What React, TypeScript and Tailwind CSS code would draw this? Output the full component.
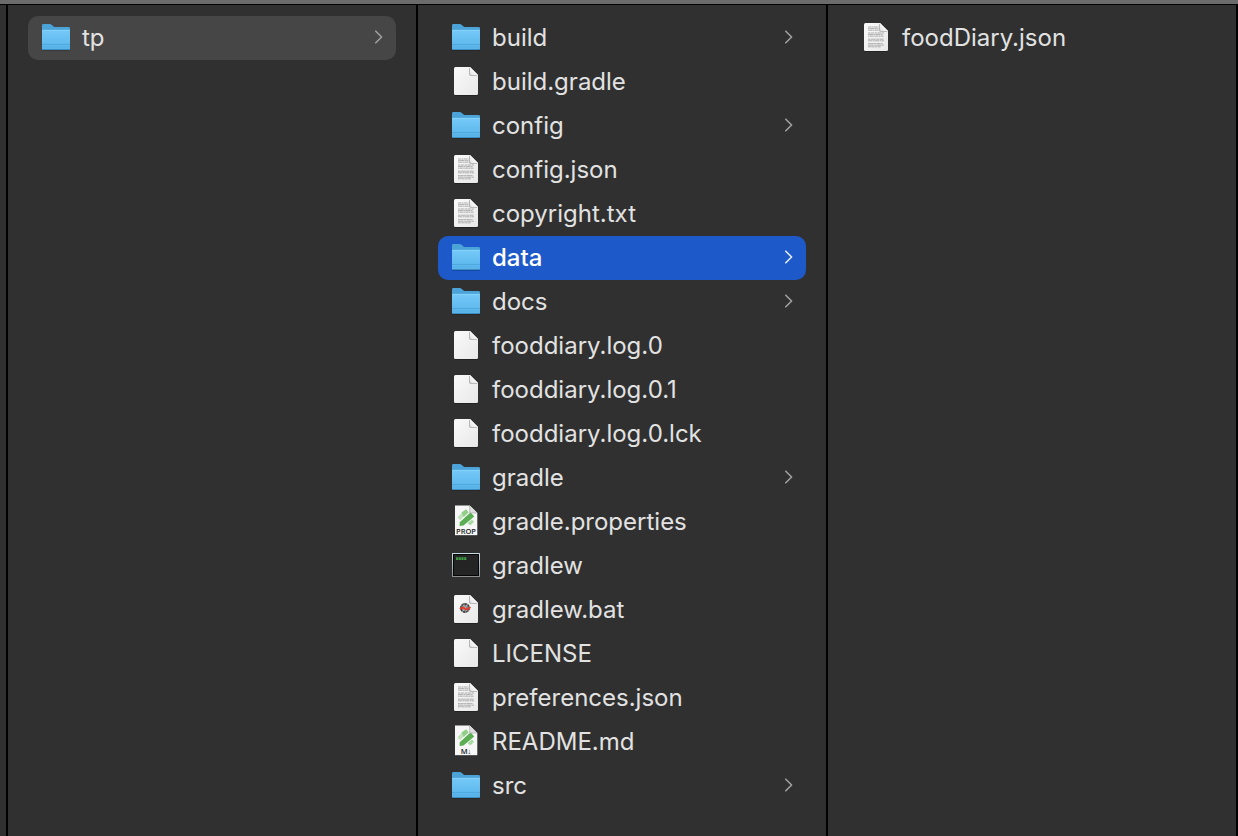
import React, { useState } from "react";

type Kind = "folder" | "blank" | "text" | "prop" | "markdown" | "exec" | "batch";
type Entry = { name: string; kind: Kind };

const rootEntries: Entry[] = [{ name: "tp", kind: "folder" }];

const projectEntries: Entry[] = [
  { name: "build", kind: "folder" },
  { name: "build.gradle", kind: "blank" },
  { name: "config", kind: "folder" },
  { name: "config.json", kind: "text" },
  { name: "copyright.txt", kind: "text" },
  { name: "data", kind: "folder" },
  { name: "docs", kind: "folder" },
  { name: "fooddiary.log.0", kind: "blank" },
  { name: "fooddiary.log.0.1", kind: "blank" },
  { name: "fooddiary.log.0.lck", kind: "blank" },
  { name: "gradle", kind: "folder" },
  { name: "gradle.properties", kind: "prop" },
  { name: "gradlew", kind: "exec" },
  { name: "gradlew.bat", kind: "batch" },
  { name: "LICENSE", kind: "blank" },
  { name: "preferences.json", kind: "text" },
  { name: "README.md", kind: "markdown" },
  { name: "src", kind: "folder" },
];

const dataEntries: Entry[] = [{ name: "foodDiary.json", kind: "text" }];

function Gradients() {
  return (
    <svg className="absolute h-0 w-0" aria-hidden="true">
      <defs>
        <linearGradient id="folderFront" x1="0" y1="0" x2="0" y2="1">
          <stop offset="0" stopColor="#74c9f8" />
          <stop offset="1" stopColor="#58b3e9" />
        </linearGradient>
        <linearGradient id="paper" x1="0" y1="0" x2="1" y2="1">
          <stop offset="0" stopColor="#fafafa" />
          <stop offset="1" stopColor="#e8e8e8" />
        </linearGradient>
        <linearGradient id="fold" x1="0" y1="1" x2="1" y2="0">
          <stop offset="0" stopColor="#dedede" />
          <stop offset="0.5" stopColor="#fbfbfb" />
          <stop offset="1" stopColor="#ffffff" />
        </linearGradient>
        <linearGradient id="bezel" x1="0" y1="0" x2="0" y2="1">
          <stop offset="0" stopColor="#c5dde6" />
          <stop offset="1" stopColor="#8b8f91" />
        </linearGradient>
      </defs>
    </svg>
  );
}

function Folder() {
  return (
    <>
      <path d="M2.5 27h27v1.6h-27z" fill="#000" opacity=".3" />
      <path d="M2 3.4Q2 2 3.4 2h6.4q1 0 1.8.8l1.6 1.4q.7.7 1.7.7h13.7Q30 4.9 30 6.3V10H2z" fill="#4ba3d8" />
      <path d="M2 8h28v18.6Q30 28 28.6 28H3.4Q2 28 2 26.6z" fill="url(#folderFront)" />
      <path d="M2.5 8.3h27" stroke="#8ed6fb" strokeWidth=".8" />
      <path d="M2 22.5h28" stroke="#4aa5dc" strokeWidth=".8" />
      <path d="M2 25h28" stroke="#51aade" strokeWidth=".5" />
      <path d="M2.6 27.5h26.8" stroke="#3c8fc2" strokeWidth="1" />
    </>
  );
}

function Paper() {
  return (
    <>
      <path d="M5 29h22.5v.8H5z" fill="#000" opacity=".35" />
      <path d="M4 2.5Q4 1 5.5 1H20l8 8v18.5q0 1.5-1.5 1.5h-21Q4 29 4 27.5z" fill="url(#paper)" />
      <path d="M19.2 1.4L27.6 9.8h-6.8q-1.6 0-1.6-1.6z" fill="#a8a8a8" />
      <path d="M20 1l8 8h-6.5q-1.5 0-1.5-1.5z" fill="url(#fold)" />
    </>
  );
}

function PrintedLines() {
  return (
    <g stroke="#999" strokeWidth=".9" opacity=".85">
      <path d="M8 5h10.5" strokeDasharray="3.2 .4 1.8 .5" />
      <path d="M8 6.6h10.5" strokeDasharray="1.8 .4 4.2 .5" />
      <path d="M8 8.2h10.5" strokeDasharray="4.6 .5 1.2 .4" />
      <path d="M8 11h16" strokeDasharray="2.3 .4 3.7 .5" />
      <path d="M8 12.6h15" strokeDasharray="5 .5 1.6 .4" />
      <path d="M8 14.2h16" strokeDasharray="1.5 .4 3 .4" />
      <path d="M8 17.2h15.5" strokeDasharray="2.7 .4 4.7 .5" />
      <path d="M8 18.8h16" strokeDasharray="4.2 .5 1.9 .4" />
      <path d="M8 21.6h15" strokeDasharray="1.9 .4 3.4 .5" />
      <path d="M8 23.2h16" strokeDasharray="5.2 .4 2.1 .5" />
      <path d="M8 24.8h13" strokeDasharray="2.8 .5" />
    </g>
  );
}

function BadgePaper({ label }: { label: string }) {
  return (
    <>
      <path d="M5.5 29h22v.9h-22z" fill="#000" opacity=".5" />
      <path d="M5 -.6h14.7L27.3 7V29.3H5z" fill="#f7f7f7" />
      <path d="M7.5 11.2l4-4 2.8 2.8-4.2 4.2z" fill="#c2e2bc" />
      <path d="M11.4 6.4l4.800-3.200 3.600 4.600-5.400 4.600z" fill="#92cf88" />
      <path d="M9.700 19.900v-3.800L20.600 6.300l3.600 4.200L13.500 19.400z" fill="#5cae54" />
      <path d="M9.400 15.600L20 6" stroke="#f7f7f7" strokeWidth="1.100" />
      <path d="M17.600 17.300l4.400-3.900 2 2.600-3.700 3.200z" fill="#a6daa0" />
      <path d="M19.700 -.6L27.300 7h-7.600z" fill="#dedede" />
      <path d="M19.700 -.2v7.200h7.200" fill="none" stroke="#9e9e9e" strokeWidth=".6" />
      <text
        x="16"
        y="28"
        textAnchor="middle"
        fontSize="7.5"
        fontWeight="600"
        fill="#222"
        fontFamily="'Open Sans', sans-serif"
      >
        {label}
      </text>
    </>
  );
}

function Terminal() {
  return (
    <>
      <rect x="2" y="3" width="28" height="24" rx=".6" fill="url(#bezel)" />
      <rect x="3" y="4" width="26" height="22" fill="#050505" />
      <rect x="4" y="5" width="24" height="20" fill="#242424" />
      <path d="M6 8.7h10.5" stroke="#42a348" strokeWidth="2.8" strokeDasharray="2.2 .5" />
      <path d="M6 8.7h10.5" stroke="#2b6f30" strokeWidth=".5" />
    </>
  );
}

function BatchMark() {
  return (
    <>
      <circle cx="15" cy="14" r="4.9" fill="#858585" />
      <circle cx="15" cy="14" r="4" fill="none" stroke="#3a3a3a" strokeWidth="1.5" strokeDasharray="2 1" />
      <path d="M13 10.5l4 7M17.5 10.5l-5 7" stroke="#d0d0d0" strokeWidth=".7" />
      <path d="M10 15.2q2.6-2.9 4.8-.7t5.6-1.4" fill="none" stroke="#e8382a" strokeWidth="1.8" />
    </>
  );
}

function EntryIcon({ kind }: { kind: Kind }) {
  return (
    <svg viewBox="0 0 32 32" className="h-8 w-8 shrink-0 overflow-visible" aria-hidden="true">
      {kind === "folder" && <Folder />}
      {(kind === "blank" || kind === "text" || kind === "batch") && <Paper />}
      {kind === "text" && <PrintedLines />}
      {kind === "batch" && <BatchMark />}
      {kind === "prop" && <BadgePaper label="PROP" />}
      {kind === "markdown" && <BadgePaper label="M↓" />}
      {kind === "exec" && <Terminal />}
    </svg>
  );
}

function Chevron({ active }: { active: boolean }) {
  return (
    <svg
      viewBox="0 0 12 16"
      className={active ? "h-4 w-3 shrink-0 text-[#e4ecfa]" : "h-4 w-3 shrink-0 text-[#a0a0a0]"}
      fill="none"
      stroke="currentColor"
      strokeWidth="1.6"
      strokeLinecap="round"
      strokeLinejoin="round"
      aria-hidden="true"
    >
      <path d="M3.8 1.2L9.6 7l-5.8 5.8" />
    </svg>
  );
}

type ColumnProps = {
  label: string;
  entries: Entry[];
  selected?: string;
  selectedClass?: string;
  brightChevron?: boolean;
  onSelect?: (name: string) => void;
};

function Column({ label, entries, selected, selectedClass = "", brightChevron = false, onSelect }: ColumnProps) {
  return (
    <section aria-label={label} className="min-w-0 flex-1 border-r-2 border-black px-5 pt-[11px]">
      <ul>
        {entries.map((entry) => {
          const active = entry.name === selected;
          return (
            <li key={entry.name}>
              <button
                type="button"
                aria-pressed={active}
                onClick={() => onSelect?.(entry.name)}
                className={`flex h-11 w-full items-center gap-2 rounded-[10px] px-3 text-left ${active ? selectedClass : "text-[#e2e2e2]"}`}
              >
                <EntryIcon kind={entry.kind} />
                <span className="min-w-0 flex-1 truncate pl-0.5">{entry.name}</span>
                {entry.kind === "folder" && <Chevron active={active && brightChevron} />}
              </button>
            </li>
          );
        })}
      </ul>
    </section>
  );
}

export default function App() {
  const [selected, setSelected] = useState("data");
  return (
    <main className="flex min-h-screen flex-col bg-[#303030] font-['Inter',sans-serif] text-2xl">
      <Gradients />
      <div className="h-[5px] border-b border-black bg-[#6b6b6b]" />
      <div className="flex flex-1">
        <div className="w-2 shrink-0 border-r-2 border-black" />
        <Column label="Root" entries={rootEntries} selected="tp" selectedClass="bg-[#464646] text-[#e2e2e2]" />
        <Column
          label="tp"
          entries={projectEntries}
          selected={selected}
          selectedClass="bg-[#1d59c8] font-[450] text-white"
          brightChevron
          onSelect={setSelected}
        />
        <Column label="data" entries={selected === "data" ? dataEntries : []} />
      </div>
    </main>
  );
}
